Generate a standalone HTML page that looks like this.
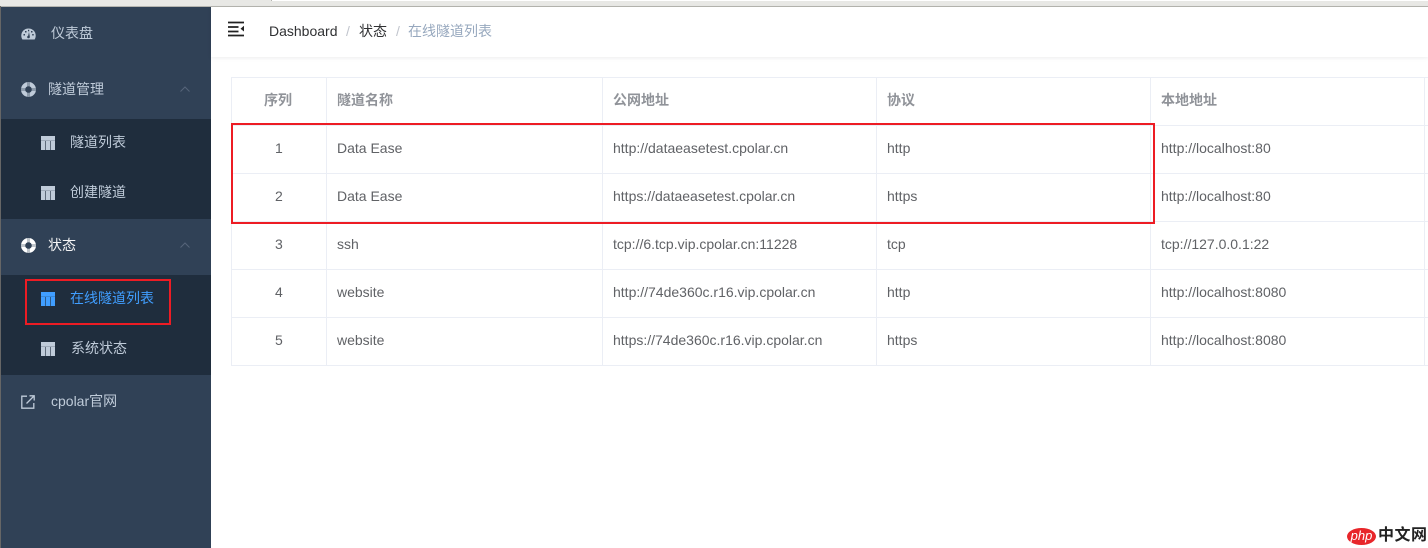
<!DOCTYPE html>
<html><head><meta charset="utf-8">
<style>
html,body{margin:0;padding:0;width:1428px;height:548px;overflow:hidden;background:#fff;font-family:"Liberation Sans","WenQuanYi Zen Hei","Noto Sans CJK SC",sans-serif;font-size:14px}
.a{position:absolute;white-space:nowrap}
.t{position:absolute;white-space:nowrap;line-height:20px;height:20px}
.s{color:#bfcbd9}
.h{color:#909399;font-weight:bold}
.c{color:#606266}
.b{position:absolute;background:#ebeef5}
svg{position:absolute;display:block}
</style></head><body>
<div class="a" style="left:0;top:0;width:1428px;height:6px;background:#e8e8e5"></div>
<div class="a" style="left:0;top:6px;width:1428px;height:1px;background:#b5b5b0"></div>
<div class="a" style="left:271px;top:0;width:1157px;height:1px;background:#fff;border-left:1px solid #b5b5b0"></div>
<div class="a" style="left:0;top:6px;width:1px;height:542px;background:#666"></div>
<div class="a" style="left:1px;top:7px;width:210px;height:541px;background:#304156"></div>
<div class="a" style="left:1px;top:119px;width:210px;height:100px;background:#1f2d3d"></div>
<div class="a" style="left:1px;top:275px;width:210px;height:100px;background:#1f2d3d"></div>

<!-- header shadow -->
<div class="a" style="left:211px;top:7px;width:1217px;height:50px;background:#fff;box-shadow:0 1px 4px rgba(0,21,41,.08)"></div>

<!-- sidebar icons -->
<svg style="left:21px;top:28px" width="15" height="12" viewBox="0 0 15 12"><path fill="#bfcbd9" d="M7.500 0.500C3.400 0.500 0.300 3.600 0.300 7.600c0 1.500.4 2.800 1.100 3.900h12.200c.7-1.100 1.100-2.400 1.100-3.900C14.700 3.600 11.600 0.500 7.500 0.500z"/><g fill="#304156"><rect x="2.500" y="6" width="1.500" height="1.500"/><rect x="4" y="3" width="1.500" height="1.500"/><rect x="7" y="1.800" width="1.200" height="1.500"/><rect x="10" y="3" width="1.500" height="1.500"/><rect x="11.200" y="6" width="1.500" height="1.500"/><path d="M7 8.500l1-4.500 .8 4.500z"/><circle cx="7.500" cy="9" r="1.300"/></g></svg>

<svg style="left:21px;top:82px" width="15" height="15" viewBox="0 0 15 15"><circle cx="7.500" cy="7.500" r="5.400" fill="none" stroke="#bfcbd9" stroke-width="4.200"/><path d="M7.500 0V4.500M7.500 10.500V15M0 7.500H4.500M10.500 7.500H15" stroke="#304156" stroke-width="3" opacity=".35"/></svg>
<svg style="left:21px;top:238px" width="15" height="15" viewBox="0 0 15 15"><circle cx="7.500" cy="7.500" r="5.400" fill="none" stroke="#fff" stroke-width="4.200"/><path d="M7.500 0V4.500M7.500 10.500V15M0 7.500H4.500M10.500 7.500H15" stroke="#304156" stroke-width="3" opacity=".3"/></svg>

<svg style="left:41px;top:136px" width="14" height="14" viewBox="0 0 14 14"><rect width="14" height="14" fill="#bfcbd9"/><path d="M4.500 5V14M9.500 5V14" stroke="#1f2d3d" stroke-width="1" opacity=".6"/><path d="M0 4.500H14" stroke="#1f2d3d" stroke-width="1" opacity=".2"/></svg>
<svg style="left:41px;top:186px" width="14" height="14" viewBox="0 0 14 14"><rect width="14" height="14" fill="#bfcbd9"/><path d="M4.500 5V14M9.500 5V14" stroke="#1f2d3d" stroke-width="1" opacity=".6"/><path d="M0 4.500H14" stroke="#1f2d3d" stroke-width="1" opacity=".2"/></svg>
<svg style="left:41px;top:292px" width="14" height="14" viewBox="0 0 14 14"><rect width="14" height="14" fill="#409eff"/><path d="M4.500 5V14M9.500 5V14" stroke="#1f2d3d" stroke-width="1" opacity=".6"/><path d="M0 4.500H14" stroke="#1f2d3d" stroke-width="1" opacity=".2"/></svg>
<svg style="left:41px;top:342px" width="14" height="14" viewBox="0 0 14 14"><rect width="14" height="14" fill="#bfcbd9"/><path d="M4.500 5V14M9.500 5V14" stroke="#1f2d3d" stroke-width="1" opacity=".6"/><path d="M0 4.500H14" stroke="#1f2d3d" stroke-width="1" opacity=".2"/></svg>

<svg style="left:21px;top:395px" width="14" height="14" viewBox="0 0 14 14"><path d="M6 1.200H.8V13.200H12.800V8" fill="none" stroke="#bfcbd9" stroke-width="1.300"/><path d="M5.500 8.500L13 1M8.500 .8H13.200V5.500" fill="none" stroke="#bfcbd9" stroke-width="1.300"/></svg>

<!-- chevrons -->
<svg style="left:180px;top:86px" width="10" height="6" viewBox="0 0 10 6"><path d="M.5 5.500L5 1 9.500 5.500" fill="none" stroke="#56657a" stroke-width="1"/></svg>
<svg style="left:180px;top:242px" width="10" height="6" viewBox="0 0 10 6"><path d="M.5 5.500L5 1 9.500 5.500" fill="none" stroke="#56657a" stroke-width="1"/></svg>

<!-- sidebar text -->
<div class="t s" style="left:51px;top:23px">仪表盘</div>
<div class="t s" style="left:48px;top:79px">隧道管理</div>
<div class="t s" style="left:70px;top:132px">隧道列表</div>
<div class="t s" style="left:70px;top:182px">创建隧道</div>
<div class="t" style="left:48px;top:235px;color:#f4f4f5">状态</div>
<div class="t" style="left:70px;top:288px;color:#409eff">在线隧道列表</div>
<div class="t s" style="left:71px;top:338px">系统状态</div>
<div class="t s" style="left:51px;top:391px">cpolar官网</div>

<!-- hamburger -->
<svg style="left:228px;top:21px" width="17" height="16" viewBox="0 0 17 16"><path d="M0 1.500H16M0 6H10.500M0 10.500H10.500M0 14.500H16" stroke="#222" stroke-width="1.700" fill="none"/><path d="M16 4.800V10.500L12.500 7.700z" fill="#222"/></svg>

<!-- breadcrumb -->
<div class="t" style="left:269px;top:21px;color:#303133">Dashboard</div>
<div class="t" style="left:346px;top:21px;color:#c0c4cc">/</div>
<div class="t" style="left:359px;top:21px;color:#303133">状态</div>
<div class="t" style="left:396px;top:21px;color:#c0c4cc">/</div>
<div class="t" style="left:408px;top:21px;color:#97a8be">在线隧道列表</div>

<!-- table lines -->
<div class="b" style="left:231px;top:77px;width:1197px;height:1px"></div>
<div class="b" style="left:231px;top:125px;width:1197px;height:1px"></div>
<div class="b" style="left:231px;top:173px;width:1197px;height:1px"></div>
<div class="b" style="left:231px;top:221px;width:1197px;height:1px"></div>
<div class="b" style="left:231px;top:269px;width:1197px;height:1px"></div>
<div class="b" style="left:231px;top:317px;width:1197px;height:1px"></div>
<div class="b" style="left:231px;top:365px;width:1197px;height:1px"></div>
<div class="b" style="left:231px;top:77px;width:1px;height:289px"></div>
<div class="b" style="left:326px;top:77px;width:1px;height:289px"></div>
<div class="b" style="left:602px;top:77px;width:1px;height:289px"></div>
<div class="b" style="left:876px;top:77px;width:1px;height:289px"></div>
<div class="b" style="left:1150px;top:77px;width:1px;height:289px"></div>
<div class="b" style="left:1424px;top:77px;width:1px;height:289px"></div>

<!-- header -->
<div class="t h" style="left:264px;top:90px">序列</div>
<div class="t h" style="left:337px;top:90px">隧道名称</div>
<div class="t h" style="left:613px;top:90px">公网地址</div>
<div class="t h" style="left:887px;top:90px">协议</div>
<div class="t h" style="left:1161px;top:90px">本地地址</div>

<!-- rows -->
<div class="t c" style="left:275px;top:138px">1</div>
<div class="t c" style="left:337px;top:138px">Data Ease</div>
<div class="t c" style="left:613px;top:138px">http://dataeasetest.cpolar.cn</div>
<div class="t c" style="left:887px;top:138px">http</div>
<div class="t c" style="left:1161px;top:138px">http://localhost:80</div>

<div class="t c" style="left:275px;top:186px">2</div>
<div class="t c" style="left:337px;top:186px">Data Ease</div>
<div class="t c" style="left:613px;top:186px">https://dataeasetest.cpolar.cn</div>
<div class="t c" style="left:887px;top:186px">https</div>
<div class="t c" style="left:1161px;top:186px">http://localhost:80</div>

<div class="t c" style="left:275px;top:234px">3</div>
<div class="t c" style="left:337px;top:234px">ssh</div>
<div class="t c" style="left:613px;top:234px">tcp://6.tcp.vip.cpolar.cn:11228</div>
<div class="t c" style="left:887px;top:234px">tcp</div>
<div class="t c" style="left:1161px;top:234px">tcp://127.0.0.1:22</div>

<div class="t c" style="left:275px;top:282px">4</div>
<div class="t c" style="left:337px;top:282px">website</div>
<div class="t c" style="left:613px;top:282px">http://74de360c.r16.vip.cpolar.cn</div>
<div class="t c" style="left:887px;top:282px">http</div>
<div class="t c" style="left:1161px;top:282px">http://localhost:8080</div>

<div class="t c" style="left:275px;top:330px">5</div>
<div class="t c" style="left:337px;top:330px">website</div>
<div class="t c" style="left:613px;top:330px">https://74de360c.r16.vip.cpolar.cn</div>
<div class="t c" style="left:887px;top:330px">https</div>
<div class="t c" style="left:1161px;top:330px">http://localhost:8080</div>

<!-- red boxes -->
<div class="a" style="left:231px;top:123px;width:920px;height:97px;border:2px solid #ed1c24"></div>
<div class="a" style="left:25px;top:279px;width:142px;height:42px;border:2px solid #ed1c24"></div>

<!-- php watermark -->
<div class="a" style="left:1347px;top:528px;width:29px;height:17px;background:#e8262a;border-radius:50%;color:#fff;font:italic 13px/16px 'Liberation Sans',sans-serif;text-align:center">php</div>
<div class="t" style="left:1378px;top:526px;color:#222;font-size:16px;line-height:20px;font-weight:bold;letter-spacing:.5px">中文网</div>
</body></html>
